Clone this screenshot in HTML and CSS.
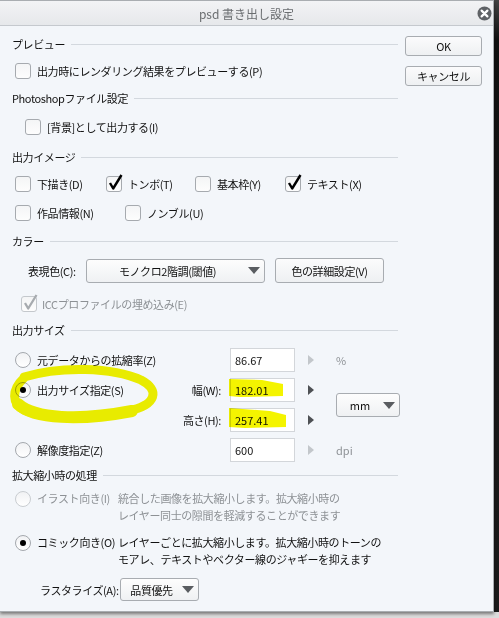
FILE: index.html
```html
<!DOCTYPE html>
<html lang="ja">
    <head>
        <meta charset="UTF-8">
        <title>psd 書き出し設定</title>
        <link rel="stylesheet" href="styles.css">
    </head>
    <body>
        <div class="screen">
            <div class="dialog">
                <div class="titlebar">
                    <span class="title">psd 書き出し設定</span>
                    <span class="close">
                        <svg width="15" height="15" viewBox="0 0 15 15">
                            <circle cx="7.5" cy="7.5" r="7" fill="#5f6266"/>
                            <path d="M4.6 4.6 L10.4 10.4 M10.4 4.6 L4.6 10.4" stroke="#fff" stroke-width="2.2" stroke-linecap="round"/>
                        </svg>
                    </span>
                </div>

                <div class="content">
                    <div class="main">
                        <div class="heading">プレビュー</div>
                        <div class="row mt11">
                            <label class="check"><span class="box"></span>出力時にレンダリング結果をプレビューする(P)</label>
                        </div>

                        <div class="heading mt11">Photoshopファイル設定</div>
                        <div class="row mt13 indent">
                            <label class="check"><span class="box"></span>[背景]として出力する(I)</label>
                        </div>

                        <div class="heading mt14">出力イメージ</div>
                        <div class="row mt11 image-row1">
                            <label class="check"><span class="box"></span>下描き(D)</label>
                            <label class="check"><span class="box checked"><svg width="17" height="18" viewBox="0 0 17 18"><path d="M4 9 L7.2 14.5 L15.5 1" fill="none" stroke="#000" stroke-width="2.4" stroke-linejoin="round"/></svg></span>トンボ(T)</label>
                            <label class="check"><span class="box"></span>基本枠(Y)</label>
                            <label class="check"><span class="box checked"><svg width="17" height="18" viewBox="0 0 17 18"><path d="M4 9 L7.2 14.5 L15.5 1" fill="none" stroke="#000" stroke-width="2.4" stroke-linejoin="round"/></svg></span>テキスト(X)</label>
                        </div>
                        <div class="row mt13 image-row2">
                            <label class="check"><span class="box"></span>作品情報(N)</label>
                            <label class="check"><span class="box"></span>ノンブル(U)</label>
                        </div>

                        <div class="heading mt12">カラー</div>
                        <div class="color-row mt9">
                            <span class="color-label">表現色(C):</span>
                            <div class="select color-select">
                                <span class="select-text">モノクロ2階調(閾値)</span>
                                <span class="caret"></span>
                            </div>
                            <button class="btn detail-btn">色の詳細設定(V)</button>
                        </div>
                        <div class="row mt13 icc">
                            <label class="check disabled"><span class="box checked"><svg width="17" height="18" viewBox="0 0 17 18"><path d="M4 9 L7.2 14.5 L15.5 1" fill="none" stroke="#a7abaf" stroke-width="2.3" stroke-linejoin="round"/></svg></span>ICCプロファイルの埋め込み(E)</label>
                        </div>

                        <div class="heading mt10">出力サイズ</div>
                        <div class="size-grid mt10">
                            <label class="radio"><span class="dot"></span>元データからの拡縮率(Z)</label>
                            <span></span>
                            <span class="field">86.67</span>
                            <span class="arrow off"></span>
                            <span class="unit">%</span>

                            <label class="radio"><span class="dot on"></span>出力サイズ指定(S)</label>
                            <span class="field-label">幅(W):</span>
                            <span class="field">182.01</span>
                            <span class="arrow"></span>
                            <div class="select unit-select">
                                <span class="select-text">mm</span>
                                <span class="caret"></span>
                            </div>

                            <span></span>
                            <span class="field-label">高さ(H):</span>
                            <span class="field">257.41</span>
                            <span class="arrow"></span>

                            <label class="radio"><span class="dot"></span>解像度指定(Z)</label>
                            <span></span>
                            <span class="field">600</span>
                            <span class="arrow off"></span>
                            <span class="unit">dpi</span>
                        </div>

                        <div class="heading mt5">拡大縮小時の処理</div>
                        <div class="mode mt7 disabled">
                            <label class="radio"><span class="dot"></span>イラスト向き(I)</label>
                            <p class="desc">統合した画像を拡大縮小します。拡大縮小時の<br>レイヤー同士の隙間を軽減することができます</p>
                        </div>
                        <div class="mode mt10">
                            <label class="radio"><span class="dot on"></span>コミック向き(O)</label>
                            <p class="desc">レイヤーごとに拡大縮小します。拡大縮小時のトーンの<br>モアレ、テキストやベクター線のジャギーを抑えます</p>
                        </div>
                        <div class="raster-row mt10">
                            <span class="raster-label">ラスタライズ(A):</span>
                            <div class="select raster-select">
                                <span class="select-text">品質優先</span>
                                <span class="caret"></span>
                            </div>
                        </div>
                    </div>

                    <div class="side">
                        <button class="btn side-btn">OK</button>
                        <button class="btn side-btn">キャンセル</button>
                    </div>
                </div>

                <!-- yellow marker drawn over the screenshot -->
                <svg class="marker" width="494" height="611" viewBox="0 0 494 611">
                    <path d="M24 377 C 60 366, 112 367, 141 380 C 160 390, 157 405, 128 411 C 98 418, 48 420, 24 410 C 12 404, 11 390, 24 378" fill="none" stroke="#f4f400" stroke-width="9" stroke-linecap="round"/>
                    <path d="M18 404 C 34 419, 80 421, 132 411" fill="none" stroke="#f4f400" stroke-width="12" stroke-linecap="round"/>
                    <polygon points="229,379 262,380 283,384 283,396 240,397 229,396" fill="#f4f400"/>
                    <polygon points="229,408 270,411 286,415 286,427 245,428 229,427" fill="#f4f400"/>
                </svg>
            </div>
            <div class="behind"></div>
        </div>
    </body>
</html>
```

FILE: styles.css
```css
* {
    box-sizing: border-box;
}

body {
    margin: 0;
    background-color: #d9d9d9;
    font-family: "Noto Sans CJK JP", "Noto Sans", sans-serif;
    font-size: 11px;
    letter-spacing: -0.4px;
    color: #111;
}

.screen {
    display: flex;
    width: 499px;
    height: 618px;
    background-color: #dcdcdc;
}

.dialog {
    position: relative;
    width: 494px;
    height: 612px;
    background-color: #f3f6fa;
    border: 1px solid #a9adb1;
    border-left: none;
    box-shadow: 0 2px 3px rgba(0,0,0,0.45);
}

.behind {
    flex: 1;
    height: 612px;
    background: linear-gradient(#444, #111 40px, #1b1b1b);
}

.titlebar {
    position: relative;
    height: 25px;
    background: linear-gradient(#f2f3f5, #e6e8eb);
    border-bottom: 1px solid #c5c9ce;
    display: flex;
    align-items: center;
    justify-content: center;
}

.title {
    font-size: 12px;
    color: #6a6d70;
    letter-spacing: 0;
}

.close {
    position: absolute;
    right: 1px;
    top: 5px;
    height: 15px;
}

.content {
    display: flex;
}

.main {
    width: 398px;
    padding: 10px 0 0 12px;
}

.side {
    margin-left: 7px;
    padding-top: 10px;
    display: flex;
    flex-direction: column;
    gap: 10px;
}

.heading {
    display: flex;
    align-items: center;
    gap: 6px;
    height: 16px;
    line-height: 16px;
}

.heading::after {
    content: "";
    flex: 1;
    height: 1px;
    background-color: #d3d8de;
}

.mt5 { margin-top: 5px; }
.mt7 { margin-top: 7px; }
.mt9 { margin-top: 9px; }
.mt10 { margin-top: 10px; }
.mt11 { margin-top: 11px; }
.mt12 { margin-top: 12px; }
.mt13 { margin-top: 13px; }
.mt14 { margin-top: 14px; }

.row {
    display: flex;
    height: 16px;
    padding-left: 3px;
}

.row.indent {
    padding-left: 13px;
}

.row.icc {
    padding-left: 9px;
}

.row.icc .check {
    gap: 5px;
}

.image-row1 {
    display: grid;
    grid-template-columns: 91px 89px 90px auto;
}

.image-row2 {
    display: grid;
    grid-template-columns: 110px auto;
}

.check, .radio {
    display: flex;
    align-items: center;
    gap: 6px;
    height: 16px;
    white-space: nowrap;
}

.box {
    position: relative;
    flex: none;
    width: 16px;
    height: 16px;
    border: 1px solid #a6aaaf;
    border-radius: 3px;
    background: linear-gradient(#f4f5f6, #fdfdfd);
}

.box svg {
    position: absolute;
    left: -1px;
    top: -3px;
}

.disabled {
    color: #8d9195;
}

.disabled .box {
    border-color: #c4c8cc;
}

.dot {
    position: relative;
    flex: none;
    width: 16px;
    height: 16px;
    border: 1px solid #a4a8ad;
    border-radius: 50%;
    background: linear-gradient(#f1f2f4, #fff);
}

.dot.on::after {
    content: "";
    position: absolute;
    left: 4px;
    top: 4px;
    width: 6px;
    height: 6px;
    border-radius: 50%;
    background-color: #000;
}

.disabled .dot {
    border-color: #c9cdd1;
}

.btn {
    font-family: inherit;
    font-size: 11px;
    letter-spacing: -0.4px;
    color: #111;
    border: 1px solid #a8acb1;
    border-radius: 3px;
    background: linear-gradient(#fbfbfc, #eef0f2);
    padding: 0;
    cursor: pointer;
}

.side-btn {
    width: 77px;
    height: 20px;
}

.color-row {
    display: flex;
    align-items: center;
    padding-left: 16px;
    height: 25px;
}

.color-label {
    width: 58px;
}

.select {
    display: flex;
    align-items: center;
    border: 1px solid #a8acb1;
    border-radius: 3px;
    background: linear-gradient(#fdfdfd, #eff1f3);
}

.select-text {
    flex: 1;
    text-align: center;
}

.caret {
    width: 0;
    height: 0;
    border-left: 6px solid transparent;
    border-right: 6px solid transparent;
    border-top: 7px solid #5a5d61;
    margin-right: 4px;
}

.color-select {
    width: 179px;
    height: 24px;
}

.detail-btn {
    margin-left: 10px;
    width: 109px;
    height: 25px;
}

.size-grid {
    display: grid;
    grid-template-columns: 150px 65px 65px 41px 64px;
    grid-auto-rows: 24px;
    row-gap: 6px;
    align-items: center;
    padding-left: 3px;
}

.field-label {
    text-align: right;
    padding-right: 9px;
}

.field {
    height: 24px;
    line-height: 22px;
    padding-left: 4px;
    border: 1px solid #d3d6da;
    background-color: #fff;
    letter-spacing: 0;
}

.arrow {
    margin-left: 13px;
    width: 0;
    height: 0;
    border-top: 5px solid transparent;
    border-bottom: 5px solid transparent;
    border-left: 6px solid #4d5054;
}

.arrow.off {
    border-left-color: #c3c7cb;
}

.unit {
    color: #8e9296;
    letter-spacing: 0;
}

.unit-select {
    grid-column: 5;
    grid-row: 2 / span 2;
    width: 64px;
    height: 24px;
    letter-spacing: 0;
}

.mode {
    display: grid;
    grid-template-columns: 103px auto;
    padding-left: 3px;
    line-height: 17px;
}

.mode .radio {
    height: 17px;
}

.desc {
    margin: 0;
    white-space: nowrap;
}

.raster-row {
    display: flex;
    align-items: center;
    padding-left: 28px;
    height: 23px;
}

.raster-label {
    width: 80px;
}

.raster-select {
    width: 79px;
    height: 23px;
}

.marker {
    position: absolute;
    left: 0;
    top: -1px;
    mix-blend-mode: multiply;
    pointer-events: none;
}
```
